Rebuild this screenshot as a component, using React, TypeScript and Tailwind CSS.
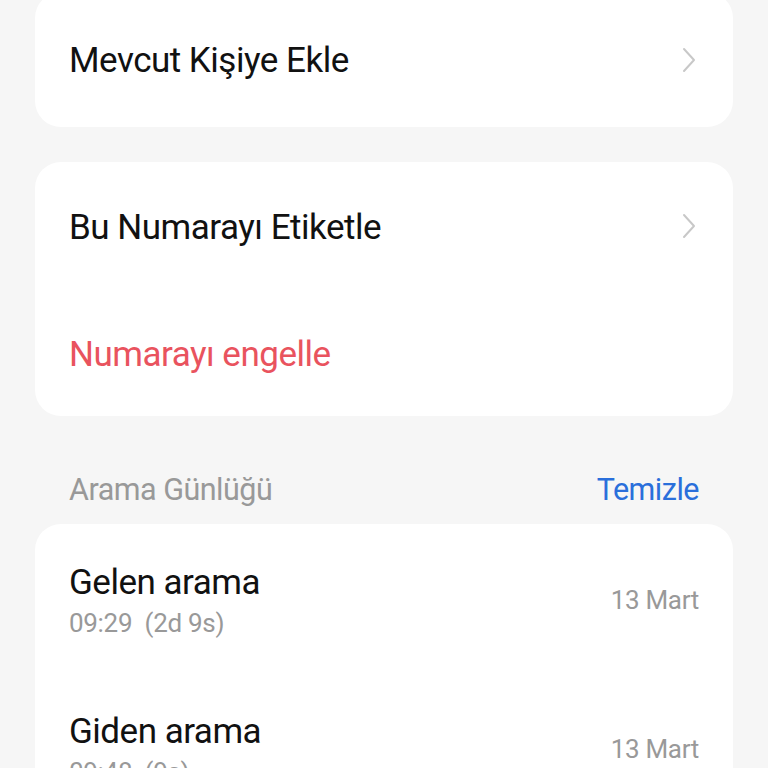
import React from "react";

const Chevron = () => (
  <svg width="16" height="28" viewBox="0 0 16 28" fill="none">
    <path d="M3 3 L13 14 L3 25" stroke="#c8c8c8" strokeWidth="2" strokeLinecap="round" strokeLinejoin="round" />
  </svg>
);

export default function App() {
  return (
    <div className="w-[768px] h-[768px] overflow-hidden bg-[#f6f6f6]" style={{ fontFamily: "Roboto, 'Noto Sans', sans-serif" }}>
      <div className="px-[35px] flex flex-col">
        <div className="-mt-[8px] bg-white rounded-[26px] h-[135px] flex items-center justify-between pl-[34px] pr-[36px]">
          <span className="text-[35px] text-[#111] tracking-[-0.5px] mt-[4px]">Mevcut Kişiye Ekle</span>
          <Chevron />
        </div>
        <div className="mt-[35px] bg-white rounded-[26px] flex flex-col">
          <div className="h-[128px] flex items-center justify-between pl-[34px] pr-[36px]">
            <span className="text-[35px] text-[#111] tracking-[-0.5px] mt-[4px]">Bu Numarayı Etiketle</span>
            <Chevron />
          </div>
          <div className="h-[126px] flex items-center pl-[34px] pr-[36px]">
            <span className="text-[35px] text-[#e9535e] tracking-[-0.5px] mt-[5px]">Numarayı engelle</span>
          </div>
        </div>
        <div className="h-[108px] flex items-start justify-between pl-[34px] pr-[34px] pt-[56px]">
          <span className="text-[30.5px] leading-[36px] text-[#999] tracking-[-0.5px]">Arama Günlüğü</span>
          <span className="text-[30.5px] leading-[36px] text-[#2a6fdb] tracking-[-0.5px]">Temizle</span>
        </div>
        <div className="bg-white rounded-[26px] flex flex-col">
          <div className="h-[149px] flex items-center justify-between pl-[34px] pr-[34px]">
            <div className="flex flex-col mt-[9px]">
              <span className="text-[35px] text-[#111] leading-[40px] tracking-[-0.5px]">Gelen arama</span>
              <span className="text-[26px] text-[#999] leading-[40px] whitespace-pre tracking-[-0.3px]">{"09:29  (2d 9s)"}</span>
            </div>
            <span className="text-[26px] text-[#999] tracking-[-0.3px] mt-[3px]">13 Mart</span>
          </div>
          <div className="h-[149px] flex items-center justify-between pl-[34px] pr-[34px]">
            <div className="flex flex-col mt-[9px]">
              <span className="text-[35px] text-[#111] leading-[40px] tracking-[-0.5px]">Giden arama</span>
              <span className="text-[26px] text-[#999] leading-[40px] whitespace-pre tracking-[-0.3px]">{"09:48  (9s)"}</span>
            </div>
            <span className="text-[26px] text-[#999] tracking-[-0.3px] mt-[3px]">13 Mart</span>
          </div>
        </div>
      </div>
    </div>
  );
}
